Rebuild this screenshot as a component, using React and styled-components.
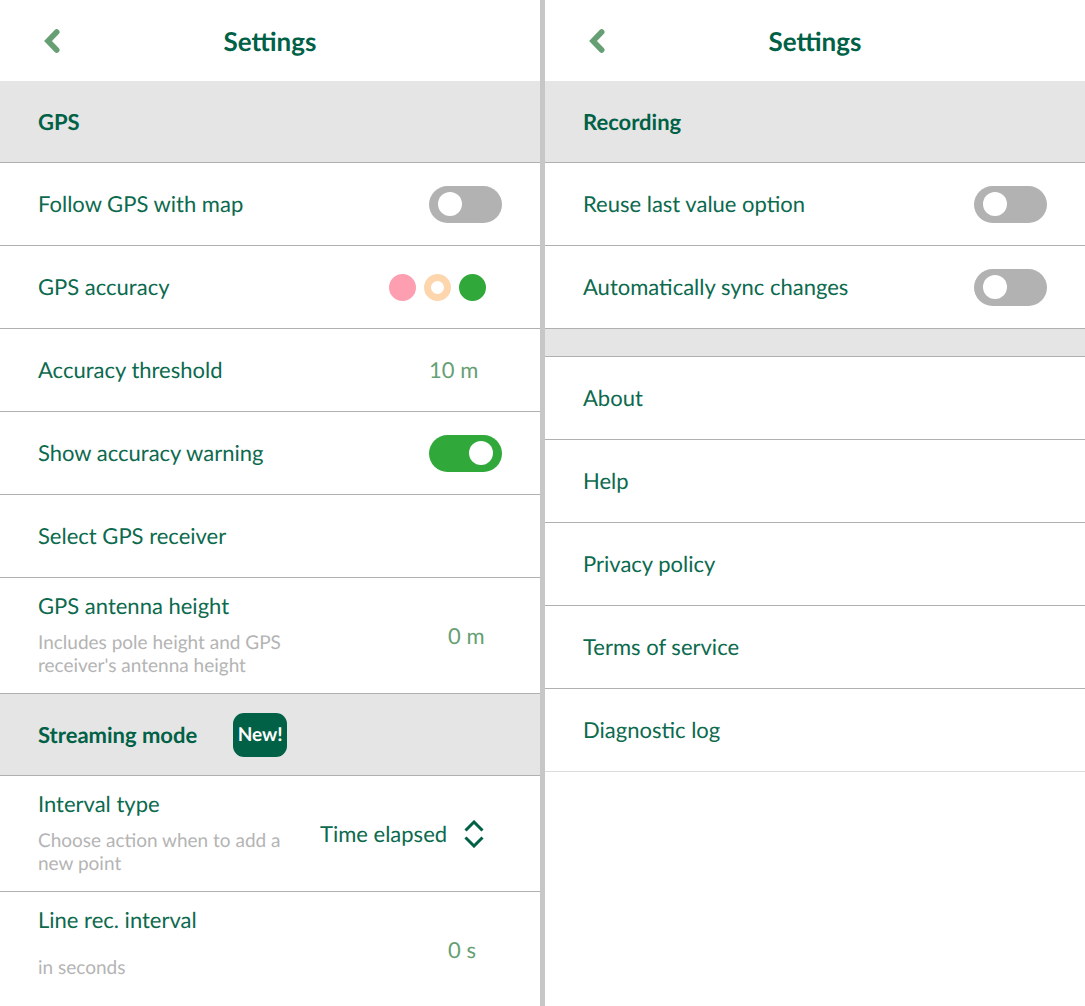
import React, { useState } from "react";
import styled, { createGlobalStyle } from "styled-components";

const forest = "#006146";
const leaf = "#0c6a4e";
const fern = "#679f74";

const GlobalStyle = createGlobalStyle`
  *, *::before, *::after { box-sizing: border-box; }
  body {
    margin: 0;
    background: #ffffff;
    color: ${leaf};
    font-family: Lato, "Liberation Sans", sans-serif;
    font-size: 22px;
    line-height: 28px;
    text-rendering: geometricPrecision;
  }
  button, input, select { font: inherit; color: inherit; text-rendering: inherit; }
`;

const Screens = styled.main`
  display: grid;
  grid-template-columns: 1fr 1fr;
  column-gap: 5px;
  min-height: 100vh;
  background: #c7c7c7;
`;

const Panel = styled.section`
  min-width: 0;
  background: #ffffff;
`;

const Header = styled.header`
  display: grid;
  grid-template-columns: 40px 1fr 40px;
  align-items: center;
  height: 81px;
  padding: 0 32px;
`;

const BackButton = styled.button`
  display: grid;
  place-items: center;
  width: 40px;
  height: 40px;
  padding: 0;
  border: 0;
  background: none;
  cursor: pointer;
`;

const Title = styled.h1`
  margin: 0;
  color: ${forest};
  font-size: 26px;
  line-height: 32px;
  font-weight: 700;
  text-align: center;
`;

const SectionBar = styled.div`
  display: flex;
  align-items: center;
  gap: 36px;
  height: ${(p) => (p.$empty ? "28px" : "82px")};
  padding: 0 38px;
  background: #e5e5e5;
  border-bottom: 1px solid #b0b0b0;
`;

const SectionTitle = styled.h2`
  margin: 0;
  color: ${forest};
  font-size: 22px;
  font-weight: 700;
`;

const Badge = styled.span`
  display: grid;
  place-items: center;
  width: 54px;
  height: 44px;
  border-radius: 11px;
  background: ${forest};
  color: #ffffff;
  font-size: 19px;
  line-height: 24px;
  font-weight: 700;
`;

const Row = styled.div`
  display: flex;
  align-items: center;
  justify-content: space-between;
  height: ${(p) => (p.$tall ? "116px" : "83px")};
  padding: 0 38px;
  border-bottom: ${(p) => (p.$last ? "0" : "1px solid #b0b0b0")};
`;

const RowLink = styled(Row).attrs({ as: "a" })`
  color: inherit;
  text-decoration: none;

  &:last-child { border-bottom-color: #dcdcdc; }
`;

const RowButton = styled(Row).attrs({ as: "button", type: "button" })`
  width: 100%;
  border-width: 0 0 1px;
  background: none;
  text-align: left;
  cursor: pointer;
`;

const Copy = styled.div`
  display: flex;
  flex-direction: column;
  align-self: flex-start;
  gap: ${(p) => (p.$loose ? "22px" : "11px")};
  width: 250px;
  padding-top: 14px;
`;

const Hint = styled.span`
  color: #b4b4b4;
  font-size: 19px;
  line-height: 23px;
`;

const Switch = styled.input.attrs({ type: "checkbox", role: "switch" })`
  appearance: none;
  display: flex;
  align-items: center;
  width: 73px;
  height: 37px;
  margin: 0;
  padding: 0 9px;
  border-radius: 19px;
  background: #b2b2b2;
  cursor: pointer;

  &::before {
    content: "";
    width: 24px;
    height: 24px;
    border-radius: 50%;
    background: #ffffff;
  }

  &:checked {
    justify-content: flex-end;
    background: #31a93a;
  }
`;

const Levels = styled.div`
  display: flex;
  gap: 8px;
  margin-right: 16px;
`;

const Level = styled.span`
  width: 27px;
  height: 27px;
  border: 7px solid ${(p) => p.$color};
  border-radius: 50%;
  background: ${(p) => (p.$ring ? "#ffffff" : p.$color)};
`;

const Value = styled.input`
  width: ${(p) => (p.$wide ? "73px" : "54px")};
  padding: 0;
  border: 0;
  background: none;
  color: ${fern};
`;

const SelectBox = styled.div`
  display: grid;
  align-items: center;
  width: 182px;

  > * { grid-area: 1 / 1; }

  > svg {
    justify-self: end;
    margin-right: 18px;
    pointer-events: none;
  }
`;

const Select = styled.select`
  appearance: none;
  width: 100%;
  padding: 0 48px 0 0;
  border: 0;
  background: none;
  cursor: pointer;
`;

function ScreenHeader() {
  return (
    <Header>
      <BackButton type="button" aria-label="Back">
        <svg width="18" height="26" viewBox="0 0 18 26" fill="none" aria-hidden="true">
          <path d="M13.7 4L5 13L13.7 22" stroke={fern} strokeWidth="5.6" strokeLinecap="round" strokeLinejoin="miter" />
        </svg>
      </BackButton>
      <Title>Settings</Title>
    </Header>
  );
}

function SwitchRow({ id, label, initial = false }) {
  const [on, setOn] = useState(initial);
  return (
    <Row>
      <label htmlFor={id}>{label}</label>
      <Switch id={id} checked={on} onChange={(e) => setOn(e.target.checked)} />
    </Row>
  );
}

const links = ["About", "Help", "Privacy policy", "Terms of service", "Diagnostic log"];

export default function App() {
  return (
    <>
      <GlobalStyle />
      <Screens>
        <Panel>
          <ScreenHeader />
          <SectionBar>
            <SectionTitle>GPS</SectionTitle>
          </SectionBar>
          <SwitchRow id="follow" label="Follow GPS with map" />
          <Row>
            <span>GPS accuracy</span>
            <Levels>
              <Level $color="#fd9fb1" />
              <Level $color="#fdd6ae" $ring />
              <Level $color="#31a93a" />
            </Levels>
          </Row>
          <Row>
            <label htmlFor="threshold">Accuracy threshold</label>
            <Value id="threshold" $wide defaultValue="10 m" />
          </Row>
          <SwitchRow id="warning" label="Show accuracy warning" initial />
          <RowButton>Select GPS receiver</RowButton>
          <Row $tall>
            <Copy>
              <label htmlFor="antenna">GPS antenna height</label>
              <Hint>Includes pole height and GPS receiver's antenna height</Hint>
            </Copy>
            <Value id="antenna" defaultValue="0 m" />
          </Row>
          <SectionBar>
            <SectionTitle>Streaming mode</SectionTitle>
            <Badge>New!</Badge>
          </SectionBar>
          <Row $tall>
            <Copy>
              <label htmlFor="interval-type">Interval type</label>
              <Hint>Choose action when to add a new point</Hint>
            </Copy>
            <SelectBox>
              <Select id="interval-type" defaultValue="time">
                <option value="time">Time elapsed</option>
                <option value="distance">Distance travelled</option>
              </Select>
              <svg width="20" height="28" viewBox="0 0 20 28" fill="none" stroke={forest} strokeWidth="3" aria-hidden="true">
                <path d="M1.5 10.5L10 2L18.5 10.5" />
                <path d="M1.5 17.5L10 26L18.5 17.5" />
              </svg>
            </SelectBox>
          </Row>
          <Row $tall $last>
            <Copy $loose>
              <label htmlFor="interval">Line rec. interval</label>
              <Hint>in seconds</Hint>
            </Copy>
            <Value id="interval" defaultValue="0 s" />
          </Row>
        </Panel>
        <Panel>
          <ScreenHeader />
          <SectionBar>
            <SectionTitle>Recording</SectionTitle>
          </SectionBar>
          <SwitchRow id="reuse" label="Reuse last value option" />
          <SwitchRow id="sync" label="Automatically sync changes" />
          <SectionBar $empty />
          <nav aria-label="Information">
            {links.map((text) => (
              <RowLink key={text} href={"#" + text.toLowerCase().replace(/ /g, "-")}>
                {text}
              </RowLink>
            ))}
          </nav>
        </Panel>
      </Screens>
    </>
  );
}
